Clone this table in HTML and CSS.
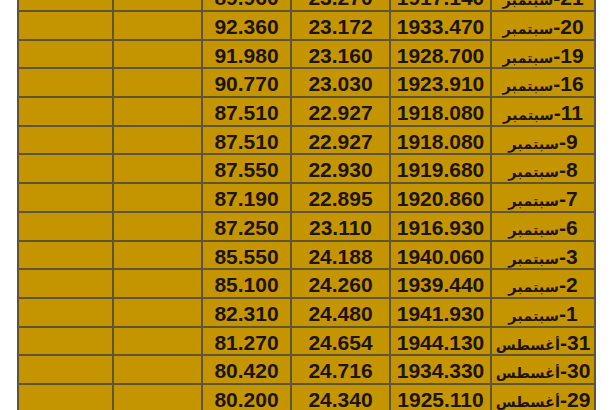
FILE: index.html
```html
<!DOCTYPE html>
<html lang="ar">
<head>
<meta charset="utf-8">
<link rel="stylesheet" href="styles.css">
</head>
<body>
<div class="page">
  <div class="sheet">
    <div class="c"></div><div class="c"></div><div class="c">89.960</div><div class="c">23.270</div><div class="c">1917.140</div><div class="c d" dir="rtl">21-<span class="m">سبتمبر</span></div>
    <div class="c"></div><div class="c"></div><div class="c">92.360</div><div class="c">23.172</div><div class="c">1933.470</div><div class="c d" dir="rtl">20-<span class="m">سبتمبر</span></div>
    <div class="c"></div><div class="c"></div><div class="c">91.980</div><div class="c">23.160</div><div class="c">1928.700</div><div class="c d" dir="rtl">19-<span class="m">سبتمبر</span></div>
    <div class="c"></div><div class="c"></div><div class="c">90.770</div><div class="c">23.030</div><div class="c">1923.910</div><div class="c d" dir="rtl">16-<span class="m">سبتمبر</span></div>
    <div class="c"></div><div class="c"></div><div class="c">87.510</div><div class="c">22.927</div><div class="c">1918.080</div><div class="c d" dir="rtl">11-<span class="m">سبتمبر</span></div>
    <div class="c"></div><div class="c"></div><div class="c">87.510</div><div class="c">22.927</div><div class="c">1918.080</div><div class="c d" dir="rtl">9-<span class="m">سبتمبر</span></div>
    <div class="c"></div><div class="c"></div><div class="c">87.550</div><div class="c">22.930</div><div class="c">1919.680</div><div class="c d" dir="rtl">8-<span class="m">سبتمبر</span></div>
    <div class="c"></div><div class="c"></div><div class="c">87.190</div><div class="c">22.895</div><div class="c">1920.860</div><div class="c d" dir="rtl">7-<span class="m">سبتمبر</span></div>
    <div class="c"></div><div class="c"></div><div class="c">87.250</div><div class="c">23.110</div><div class="c">1916.930</div><div class="c d" dir="rtl">6-<span class="m">سبتمبر</span></div>
    <div class="c"></div><div class="c"></div><div class="c">85.550</div><div class="c">24.188</div><div class="c">1940.060</div><div class="c d" dir="rtl">3-<span class="m">سبتمبر</span></div>
    <div class="c"></div><div class="c"></div><div class="c">85.100</div><div class="c">24.260</div><div class="c">1939.440</div><div class="c d" dir="rtl">2-<span class="m">سبتمبر</span></div>
    <div class="c"></div><div class="c"></div><div class="c">82.310</div><div class="c">24.480</div><div class="c">1941.930</div><div class="c d" dir="rtl">1-<span class="m">سبتمبر</span></div>
    <div class="c"></div><div class="c"></div><div class="c">81.270</div><div class="c">24.654</div><div class="c">1944.130</div><div class="c d" dir="rtl">31-<span class="m">أغسطس</span></div>
    <div class="c"></div><div class="c"></div><div class="c">80.420</div><div class="c">24.716</div><div class="c">1934.330</div><div class="c d" dir="rtl">30-<span class="m">أغسطس</span></div>
    <div class="c"></div><div class="c"></div><div class="c">80.200</div><div class="c">24.340</div><div class="c">1925.110</div><div class="c d" dir="rtl">29-<span class="m">أغسطس</span></div>
  </div>
</div>
</body>
</html>
```
FILE: styles.css
```css
html, body {
  margin: 0;
  padding: 0;
  background: #ffffff;
  overflow: hidden;
}
.page {
  padding-left: 17px;
  height: 410px;
  overflow: hidden;
}
.sheet {
  display: grid;
  grid-template-columns: 93px 87px 87px 97px 99px 102px;
  grid-auto-rows: 26.7px;
  gap: 2px;
  padding: 2px;
  width: max-content;
  background: #5e5436;
  margin-top: -18.7px;
}
.c {
  background: #c59500;
  color: #1c1408;
  font-family: "Liberation Sans", Arial, sans-serif;
  font-weight: bold;
  font-size: 21px;
  line-height: 22.7px;
  padding-top: 4px;
  text-align: center;
  white-space: nowrap;
  overflow: hidden;
}
.d {
  direction: rtl;
}
.m {
  font-family: "DejaVu Sans", sans-serif;
  font-weight: bold;
  font-size: 14.5px;
}
```
